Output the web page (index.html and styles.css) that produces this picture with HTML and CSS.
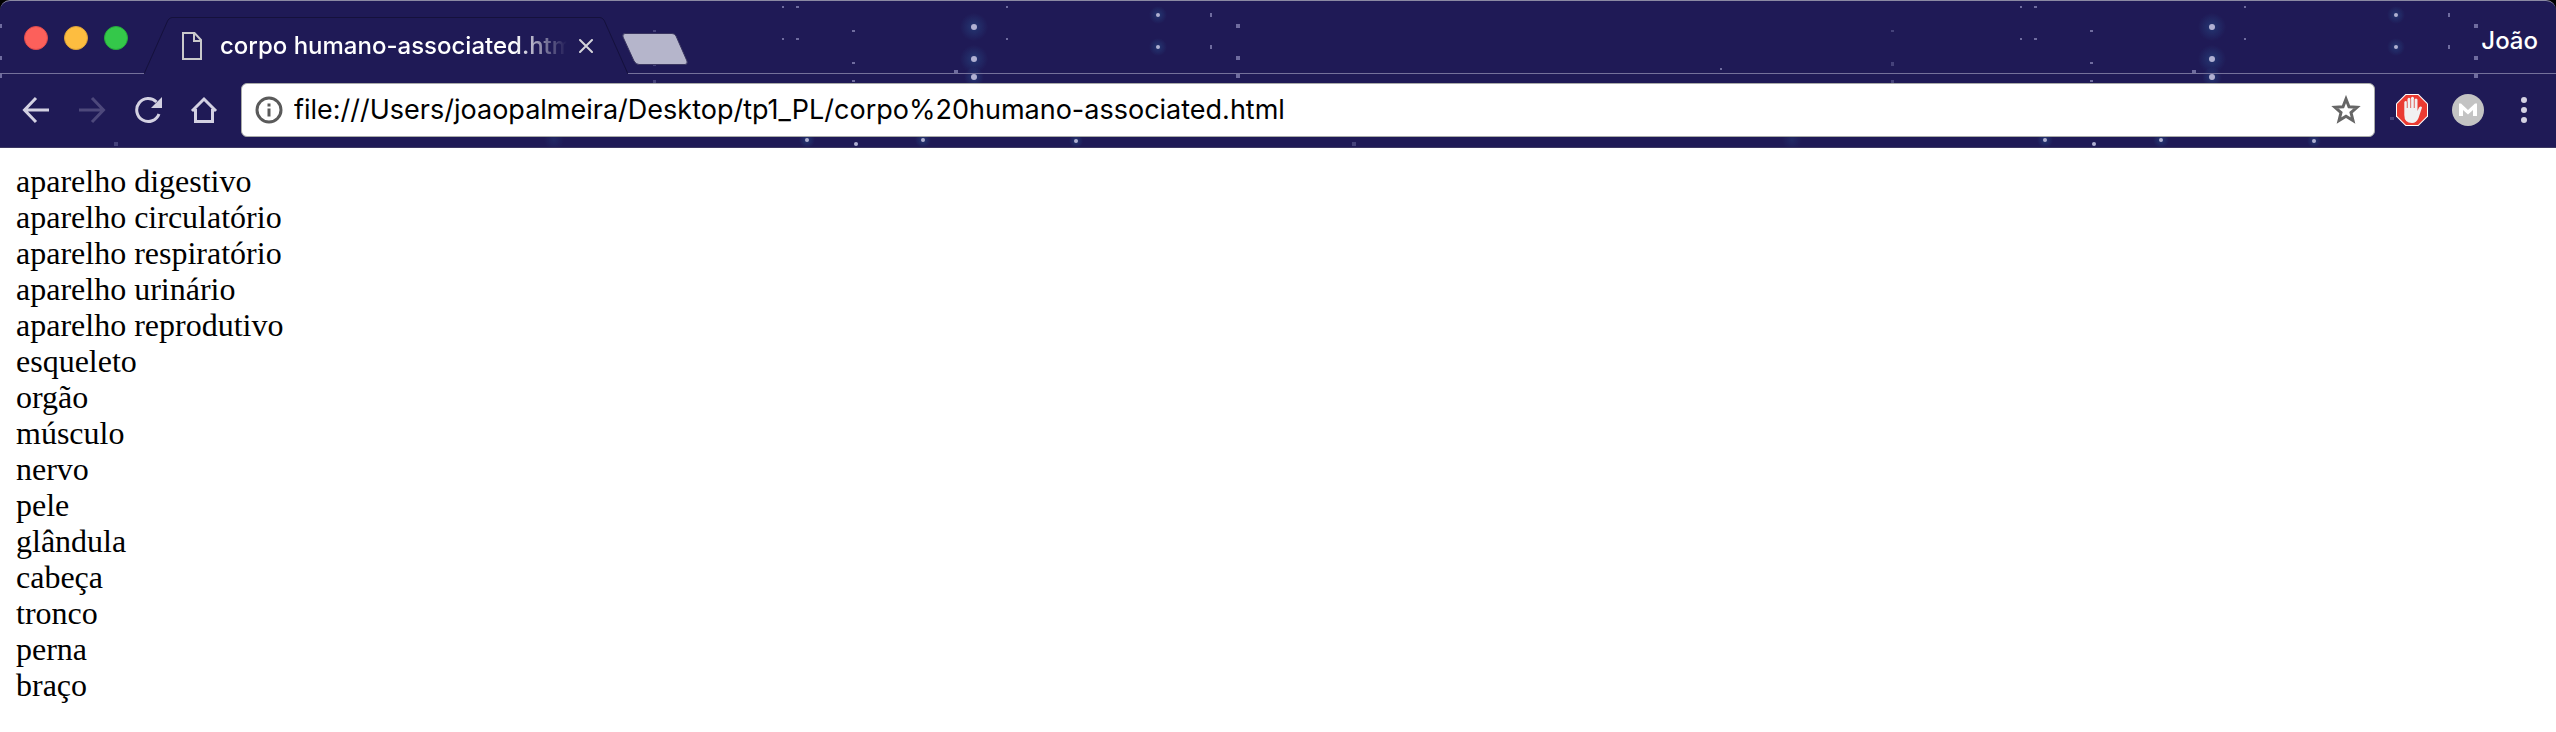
FILE: index.html
```
<!DOCTYPE html>
<html lang="pt">
<head>
<meta charset="utf-8">
<meta name="viewport" content="width=device-width, initial-scale=1">
<title>corpo humano-associated.html</title>
<link rel="stylesheet" href="styles.css">
</head>
<body>
<div class="desktop">
<header class="chrome">
  <svg class="sky" width="100%" height="100%" aria-hidden="true">
    <defs>
      <radialGradient id="glow">
        <stop offset="0" stop-color="#2a5a96" stop-opacity=".45"/>
        <stop offset="1" stop-color="#2a5a96" stop-opacity="0"/>
      </radialGradient>
      <pattern id="stars" x="60" y="0" width="1238" height="148" patternUnits="userSpaceOnUse">
        <g fill="url(#glow)">
          <circle cx="914" cy="26" r="14"/><circle cx="914" cy="58" r="14"/><circle cx="914" cy="76" r="10"/>
          <circle cx="1098" cy="14" r="9"/><circle cx="1098" cy="46" r="9"/>
          <circle cx="747" cy="139" r="8"/><circle cx="863" cy="139" r="8"/><circle cx="1016" cy="140" r="7"/>
          <circle cx="494" cy="139" r="10" opacity=".5"/>
        </g>
        <g fill="#b0b0d2">
          <circle cx="914" cy="26" r="3"/><circle cx="914" cy="58" r="3"/><circle cx="914" cy="76" r="3"/>
          <circle cx="1098" cy="14" r="2"/><circle cx="1098" cy="46" r="2"/>
          <circle cx="747" cy="139" r="2"/><circle cx="863" cy="139" r="2"/><circle cx="1016" cy="140" r="2"/><circle cx="796" cy="143" r="2"/>
        </g>
        <g fill="#6f6c9f">
          <path d="M722 5h2v2h-2zM736 5h3v2h-3zM946 5h2v2h-2zM722 37h2v2h-2zM736 37h3v2h-3zM946 37h2v2h-2z"/>
          <path d="M1150 12h2v4h-2zM1150 44h2v4h-2zM1176 23h4v4h-4zM1176 55h4v4h-4zM1176 73h4v4h-4z"/>
          <path d="M792 29h3v2h-3zM792 61h3v2h-3zM792 79h3v2h-3zM894 69h4v3h-4zM422 67h2v2h-2z"/>
        </g>
        <path fill="#45427a" d="M593 29h3v2h-3zM593 61h3v4h-3zM593 79h3v3h-3zM54 141h4v4h-4zM1092 116h4v3h-4z"/>
      </pattern>
    </defs>
    <rect width="100%" height="100%" fill="url(#stars)"/>
  </svg>

  <div class="tabstrip">
    <div class="lights">
      <button class="light light-close" aria-label="Fechar"></button>
      <button class="light light-min" aria-label="Minimizar"></button>
      <button class="light light-max" aria-label="Maximizar"></button>
    </div>
    <div class="tab">
      <svg class="tab-shape" viewBox="0 0 484 57" width="484" height="57" aria-hidden="true">
        <path d="M0 57 24 3Q26 .500 28 .500H456Q458 .500 460 3L484 57Z" fill="#1f1a56"/>
        <path d="M0 57 24 3Q26 .500 28 .500H456Q458 .500 460 3L484 57" fill="none" stroke="#15113c"/>
      </svg>
      <svg class="tab-icon" viewBox="0 0 20 28" width="20" height="28" fill="none" stroke="#c9c9cb" stroke-width="2" aria-hidden="true">
        <path d="M1 1H12.500L19 8V27H1ZM12 1V9H19"/>
      </svg>
      <span class="tab-title">corpo humano-associated.html</span>
      <button class="tab-close" aria-label="Fechar separador">
        <svg viewBox="0 0 14 14" width="14" height="14" stroke="#d4d4da" stroke-width="2" stroke-linecap="round"><path d="M1 1 13 13M13 1 1 13"/></svg>
      </button>
    </div>
    <button class="newtab" aria-label="Novo separador">
      <svg viewBox="0 0 66 32" width="66" height="32"><path d="M3 .500H50Q53 .500 54 3L65 28Q66 31.500 63 31.500H17Q14 31.500 12 28L1 4Q0 .500 3 .500Z" fill="#b5b5cb" stroke="#3a3660" stroke-width="1"/></svg>
    </button>
    <button class="user">João</button>
  </div>

  <div class="toolbar">
    <button class="tool" aria-label="Retroceder">
      <svg viewBox="0 0 28 28" width="28" height="28" fill="none" stroke="#d3d1e2" stroke-width="3"><path d="M27 14H3M14 2 2.500 14 14 26" /></svg>
    </button>
    <button class="tool" aria-label="Avançar" disabled>
      <svg viewBox="0 0 28 28" width="28" height="28" fill="none" stroke="#4d487b" stroke-width="3"><path d="M1 14H25M14 2 25.500 14 14 26"/></svg>
    </button>
    <button class="tool" aria-label="Recarregar">
      <svg viewBox="0 0 28 28" width="28" height="28" fill="none" stroke="#d3d1e2" stroke-width="3"><path d="M22.500 6A11.500 11.500 0 1 0 25 18"/><path d="M28 1V12H17Z" fill="#d3d1e2" stroke="none"/></svg>
    </button>
    <button class="tool" aria-label="Página inicial">
      <svg viewBox="0 0 28 28" width="28" height="28" fill="none" stroke="#d3d1e2" stroke-width="3"><path d="M2 15 14 3 26 15M5.500 13V25.500H22.500V13"/></svg>
    </button>
    <div class="omnibox">
      <svg viewBox="0 0 28 28" width="28" height="28" aria-hidden="true"><circle cx="14" cy="14" r="12" fill="none" stroke="#5a5a5a" stroke-width="3"/><path d="M12.500 7.500h3v3h-3zM12.500 12.500h3v8h-3z" fill="#5a5a5a"/></svg>
      <input class="url" type="text" aria-label="Endereço" value="file:///Users/joaopalmeira/Desktop/tp1_PL/corpo%20humano-associated.html">
      <button class="bookmark" aria-label="Adicionar aos favoritos">
        <svg viewBox="0 0 30 30" width="30" height="30"><path d="M15 4 18 11.700 26 12.300 20 17.500 22 25.500 15 21.200 8 25.500 10 17.500 4 12.300 12 11.700Z" fill="none" stroke="#666" stroke-width="3"/></svg>
      </button>
    </div>
    <button class="tool" aria-label="Bloqueador de anúncios">
      <svg viewBox="0 0 32 32" width="32" height="32">
        <path d="M9.500 0H22.500L32 9.500V22.500L22.500 32H9.500L0 22.500V9.500Z" fill="#fff"/>
        <path d="M10 1H22L31 10V22L22 31H10L1 22V10Z" fill="#ea3b32"/>
        <path d="M8.300 8Q9.800 6 11 8V14H11.500V5Q13 2.500 14.500 5V14H15V4Q16.500 1.500 18 4V14H18.500V5.500Q20 3.500 21.500 5.500V17L23 13.500Q25 11.500 26 13.500L22.500 24Q20.500 29 16 29Q8.300 29 8.300 21Z" fill="#f1f1f1"/>
        <path d="M11.200 8V14M14.700 5V14M18.200 5V14" stroke="#e07a75" stroke-width="1"/>
      </svg>
    </button>
    <button class="tool" aria-label="MEGA">
      <svg viewBox="0 0 32 32" width="32" height="32"><circle cx="16" cy="16" r="16" fill="#c3c3c3"/><path d="M7 22V9.500H9L16 16 23 9.500H25V22H21V16L16 20.500 11 16V22Z" fill="#fff"/></svg>
    </button>
    <button class="tool" aria-label="Menu">
      <svg viewBox="0 0 6 26" width="6" height="26" fill="#d3d1e2"><circle cx="3" cy="3" r="3"/><circle cx="3" cy="13" r="3"/><circle cx="3" cy="23" r="3"/></svg>
    </button>
  </div>
</header>
</div>

<main class="page">
  <div>aparelho digestivo</div>
  <div>aparelho circulatório</div>
  <div>aparelho respiratório</div>
  <div>aparelho urinário</div>
  <div>aparelho reprodutivo</div>
  <div>esqueleto</div>
  <div>orgão</div>
  <div>músculo</div>
  <div>nervo</div>
  <div>pele</div>
  <div>glândula</div>
  <div>cabeça</div>
  <div>tronco</div>
  <div>perna</div>
  <div>braço</div>
</main>
</body>
</html>
```
FILE: styles.css
```
* { box-sizing: border-box; }

body {
  margin: 0;
  background: #fff;
  color: #000;
}

button {
  padding: 0;
  border: 0;
  background: none;
  color: inherit;
  font: inherit;
}

svg { display: block; }

.desktop { background: #000; }

.chrome {
  position: relative;
  overflow: hidden;
  border-top: 1px solid #8b8aa3;
  border-bottom: 1px solid #3c3862;
  border-radius: 10px 10px 0 0;
  background: #1f1a56;
  color: #fff;
  font-family: Inter, Roboto, sans-serif;
}

.sky {
  position: absolute;
  inset: 0;
}

.tabstrip {
  position: relative;
  display: flex;
  align-items: flex-start;
  height: 73px;
  border-bottom: 1px solid #74719b;
}

.lights {
  display: flex;
  gap: 16px;
  padding: 25px 16px 0 24px;
}

.light {
  width: 24px;
  height: 24px;
  border-radius: 50%;
}

.light-close { background: #fc605b; border: 1px solid #dd4a4c; }
.light-min { background: #fdbd40; border: 1px solid #dba038; }
.light-max { background: #34c84a; border: 1px solid #26a93b; }

.tab {
  position: relative;
  display: flex;
  align-items: center;
  width: 484px;
  height: 57px;
  margin-top: 16px;
  padding: 0 35px 0 38px;
}

.tab-shape {
  position: absolute;
  inset: 0;
}

.tab-icon { position: relative; }

.tab-title {
  position: relative;
  flex: 1;
  margin: 0 12px 0 18px;
  overflow: hidden;
  white-space: nowrap;
  font-size: 24px;
  font-weight: 500;
  line-height: 32px;
  mask-image: linear-gradient(to right, #000 calc(100% - 52px), transparent);
}

.tab-close { position: relative; }

.newtab { margin: 32px 0 0 -6px; }

.user {
  margin: 24px 18px 0 auto;
  font-size: 24px;
  font-weight: 500;
  line-height: 32px;
}

.toolbar {
  position: relative;
  display: flex;
  align-items: center;
  padding: 9px 4px 10px 8px;
}

.tool {
  display: flex;
  flex: none;
  align-items: center;
  justify-content: center;
  width: 56px;
  height: 32px;
}

.omnibox {
  display: flex;
  flex: 1;
  align-items: center;
  height: 54px;
  margin: 0 9px;
  padding: 0 13px;
  border: 1px solid #a9aba9;
  border-radius: 6px;
  background: #fff;
}

.url {
  flex: 1;
  min-width: 0;
  height: 40px;
  margin: 0 11px;
  padding: 0;
  border: 0;
  outline: 0;
  background: none;
  color: #000;
  font: 400 27px/40px Inter, Roboto, sans-serif;
}

.page {
  padding: 15px 16px;
  font: 32px/36px "Liberation Serif", "Times New Roman", serif;
}
```
